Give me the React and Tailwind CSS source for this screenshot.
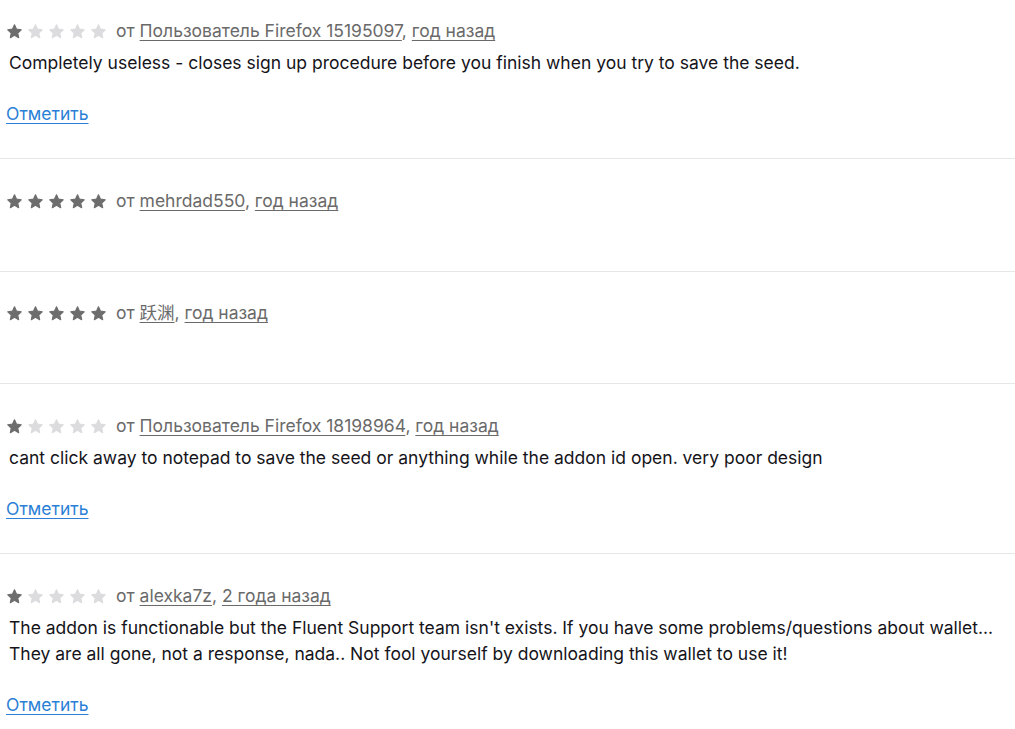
import React from "react";

/* Star drawn inline, rounded joins like the reference */
function Star({ filled }) {
  return (
    <svg viewBox="0 0 24 24" className="h-[17px] w-[17px]" aria-hidden="true">
      <path
        d="M12 2.6l2.9 6.1 6.6.8-4.9 4.6 1.3 6.6L12 17.4l-5.9 3.3 1.3-6.6-4.9-4.6 6.6-.8L12 2.6Z"
        fill={filled ? "#6d6d6d" : "#dcdcdf"}
        stroke={filled ? "#6d6d6d" : "#dcdcdf"}
        strokeWidth="1.6"
        strokeLinejoin="round"
      />
    </svg>
  );
}

const reviews = [
  {
    rating: 1,
    author: "Пользователь Firefox 15195097",
    when: "год назад",
    body: [
      "Completely useless - closes sign up procedure before you finish when you try to save the seed.",
    ],
  },
  { rating: 5, author: "mehrdad550", when: "год назад", body: [] },
  { rating: 5, author: "跃渊", when: "год назад", body: [] },
  {
    rating: 1,
    author: "Пользователь Firefox 18198964",
    when: "год назад",
    body: [
      "cant click away to notepad to save the seed or anything while the addon id open. very poor design",
    ],
  },
  {
    rating: 1,
    author: "alexka7z",
    when: "2 года назад",
    body: [
      "The addon is functionable but the Fluent Support team isn't exists. If you have some problems/questions about wallet...",
      "They are all gone, not a response, nada.. Not fool yourself by downloading this wallet to use it!",
    ],
  },
];

function Review({ r, first }) {
  return (
    <li
      className={`border-b border-[#e6e6e6] pb-[32px] pl-[6px] ${
        first ? "pt-[19px]" : "pt-[30px]"
      }`}
    >
      {/* rating + byline */}
      <div className="flex h-6 items-center text-[17.5px] text-[#6a6a6a]">
        <div className="flex items-center gap-1">
          {[1, 2, 3, 4, 5].map((n) => (
            <Star key={n} filled={n <= r.rating} />
          ))}
        </div>
        <span className="ml-[9px]">
          от <a href="#" className="underline underline-offset-[3px]">{r.author}</a>,{" "}
          <a href="#" className="underline underline-offset-[3px]">{r.when}</a>
        </span>
      </div>

      {r.body.length > 0 ? (
        <>
          <div className="mt-[7px] pl-[3px] text-[17.5px] leading-[26px] text-[#15141a]">
            {r.body.map((line, i) => (
              <p key={i}>{line}</p>
            ))}
          </div>
          <a
            href="#"
            className="mt-[26px] block w-max text-[17.5px] leading-6 text-[#2b7fd6] underline underline-offset-[3px]"
          >
            Отметить
          </a>
        </>
      ) : (
        <div className="h-[25.5px]" />
      )}
    </li>
  );
}

export default function App() {
  return (
    <div className="min-h-screen w-[1015px] bg-white font-['Inter','Noto_Sans_CJK_SC',sans-serif]">
      <ul>
        {reviews.map((r, i) => (
          <Review key={i} r={r} first={i === 0} />
        ))}
      </ul>
    </div>
  );
}
